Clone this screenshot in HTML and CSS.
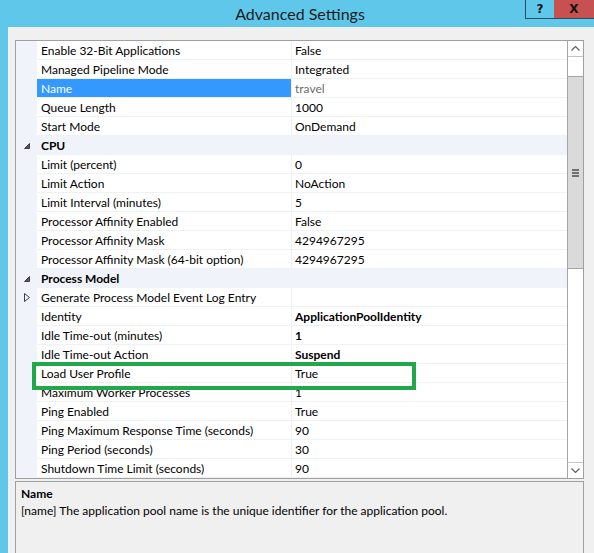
FILE: index.html
```html
<!DOCTYPE html>
<html lang="en">
<head>
    <meta charset="UTF-8">
    <title>Advanced Settings</title>
    <link rel="stylesheet" href="styles.css">
</head>
<body>

<div class="window">
    <!-- Title bar -->
    <div class="titlebar">
        <span class="title">Advanced Settings</span>
        <div class="controls">
            <span class="btn help">?</span>
            <span class="btn close">X</span>
        </div>
    </div>

    <div class="client">
        <!-- Property grid -->
        <div class="grid">
            <div class="rows">
                <div class="row"><span class="gutter"></span><span class="name">Enable 32-Bit Applications</span><span class="value">False</span></div>
                <div class="row"><span class="gutter"></span><span class="name">Managed Pipeline Mode</span><span class="value">Integrated</span></div>
                <div class="row selected"><span class="gutter"></span><span class="name">Name</span><span class="value">travel</span></div>
                <div class="row"><span class="gutter"></span><span class="name">Queue Length</span><span class="value">1000</span></div>
                <div class="row"><span class="gutter"></span><span class="name">Start Mode</span><span class="value">OnDemand</span></div>
                <div class="row category">
                    <span class="gutter"><svg width="6" height="6" viewBox="0 0 6 6"><polygon points="5.5,0.5 5.5,5.5 0.5,5.5" fill="#595959" stroke="#404040" stroke-width="1"/></svg></span>
                    <span class="name">CPU</span>
                </div>
                <div class="row"><span class="gutter"></span><span class="name">Limit (percent)</span><span class="value">0</span></div>
                <div class="row"><span class="gutter"></span><span class="name">Limit Action</span><span class="value">NoAction</span></div>
                <div class="row"><span class="gutter"></span><span class="name">Limit Interval (minutes)</span><span class="value">5</span></div>
                <div class="row"><span class="gutter"></span><span class="name">Processor Affinity Enabled</span><span class="value">False</span></div>
                <div class="row"><span class="gutter"></span><span class="name">Processor Affinity Mask</span><span class="value">4294967295</span></div>
                <div class="row"><span class="gutter"></span><span class="name">Processor Affinity Mask (64-bit option)</span><span class="value">4294967295</span></div>
                <div class="row category">
                    <span class="gutter"><svg width="6" height="6" viewBox="0 0 6 6"><polygon points="5.5,0.5 5.5,5.5 0.5,5.5" fill="#595959" stroke="#404040" stroke-width="1"/></svg></span>
                    <span class="name">Process Model</span>
                </div>
                <div class="row">
                    <span class="gutter"><svg width="6" height="9" viewBox="0 0 6 9"><polygon points="0.5,0.5 5.5,4.5 0.5,8.5" fill="none" stroke="#404040" stroke-width="1"/></svg></span>
                    <span class="name">Generate Process Model Event Log Entry</span><span class="value"></span>
                </div>
                <div class="row"><span class="gutter"></span><span class="name">Identity</span><span class="value bold">ApplicationPoolIdentity</span></div>
                <div class="row"><span class="gutter"></span><span class="name">Idle Time-out (minutes)</span><span class="value bold">1</span></div>
                <div class="row"><span class="gutter"></span><span class="name">Idle Time-out Action</span><span class="value bold">Suspend</span></div>
                <div class="row"><span class="gutter"></span><span class="name">Load User Profile</span><span class="value">True</span></div>
                <div class="row"><span class="gutter"></span><span class="name">Maximum Worker Processes</span><span class="value">1</span></div>
                <div class="row"><span class="gutter"></span><span class="name">Ping Enabled</span><span class="value">True</span></div>
                <div class="row"><span class="gutter"></span><span class="name">Ping Maximum Response Time (seconds)</span><span class="value">90</span></div>
                <div class="row"><span class="gutter"></span><span class="name">Ping Period (seconds)</span><span class="value">30</span></div>
                <div class="row"><span class="gutter"></span><span class="name">Shutdown Time Limit (seconds)</span><span class="value">90</span></div>
            </div>

            <!-- Vertical scrollbar -->
            <div class="scrollbar">
                <div class="sb-btn">
                    <svg width="9" height="5" viewBox="0 0 9 5"><polyline points="0.5,4.5 4.5,0.5 8.5,4.5" fill="none" stroke="#606060" stroke-width="1.2"/></svg>
                </div>
                <div class="sb-space top"></div>
                <div class="sb-thumb">
                    <span class="grip"></span><span class="grip"></span><span class="grip"></span>
                </div>
                <div class="sb-space"></div>
                <div class="sb-btn down">
                    <svg width="9" height="5" viewBox="0 0 9 5"><polyline points="0.5,0.5 4.5,4.5 8.5,0.5" fill="none" stroke="#606060" stroke-width="1.2"/></svg>
                </div>
            </div>
        </div>

        <!-- Description panel -->
        <div class="desc">
            <div class="desc-title">Name</div>
            <div class="desc-text">[name] The application pool name is the unique identifier for the application pool.</div>
        </div>

        <!-- Annotation drawn over the grid -->
        <div class="highlight"></div>
    </div>
</div>

</body>
</html>
```

FILE: styles.css
```css
html, body {
    margin: 0;
    padding: 0;
}
body {
    width: 594px;
    height: 553px;
    overflow: hidden;
    background-color: #5fc8ea;
    font-family: Lato, "Noto Sans", sans-serif;
    font-size: 12px;
    color: #000;
}
.window {
    display: flex;
    flex-direction: column;
    height: 100%;
}
.titlebar {
    position: relative;
    flex-shrink: 0;
    height: 27px;
    display: flex;
    align-items: center;
    justify-content: center;
}
.title {
    font-size: 16px;
    color: #1c1c1c;
    margin-left: 6px;
}
.controls {
    position: absolute;
    top: 0;
    right: 0;
    display: flex;
}
.btn {
    height: 19px;
    display: flex;
    align-items: center;
    justify-content: center;
    font-family: "DejaVu Sans", sans-serif;
    font-weight: bold;
    font-size: 12px;
    color: #111;
    box-sizing: border-box;
}
.help {
    width: 29px;
    border: 1px solid #2d4f5c;
    border-top: none;
    border-right: none;
}
.close {
    width: 40px;
    background-color: #c75050;
    border-bottom: 1px solid #2d4f5c;
}
.client {
    position: relative;
    flex: 1;
    min-height: 0;
    overflow: hidden;
    margin-left: 8px;
    background-color: #f0f0f0;
    padding: 13px 10px 0 7px;
}
.grid {
    display: flex;
    border: 1px solid #a0a0a0;
    background-color: #fff;
    height: 437px;
}
.rows {
    flex: 1;
}
.row {
    display: grid;
    grid-template-columns: 21px 255px 1fr;
    height: 19px;
    line-height: 18px;
}
.gutter {
    background-color: #f0f4fa;
    display: flex;
    align-items: center;
    justify-content: center;
}
.name, .value {
    box-sizing: border-box;
    border-bottom: 1px solid #eef1f6;
    padding: 1px 0 0 4px;
    white-space: nowrap;
    overflow: hidden;
}
.name {
    border-right: 1px solid #eef1f6;
}
.value {
    padding-left: 3px;
}
.bold {
    font-weight: bold;
}
.selected .name {
    background-color: #3399ff;
    color: #fff;
}
.selected .value {
    color: #6d6d6d;
}
.category {
    background-color: #f0f4fa;
}
.category .name {
    grid-column: 2 / 4;
    font-weight: bold;
    border: none;
}
.scrollbar {
    width: 15px;
    border-left: 1px solid #a6a6a6;
    display: flex;
    flex-direction: column;
}
.sb-btn {
    height: 15px;
    border-bottom: 1px solid #c4c4c4;
    display: flex;
    align-items: center;
    justify-content: center;
}
.sb-btn.down {
    border-bottom: none;
    border-top: 1px solid #c4c4c4;
}
.sb-space {
    flex: 1;
}
.sb-space.top {
    flex: 0 0 19px;
}
.sb-thumb {
    height: 191px;
    background-color: #dadada;
    border-top: 1px solid #a6a6a6;
    border-bottom: 1px solid #a6a6a6;
    display: flex;
    flex-direction: column;
    align-items: center;
    justify-content: center;
    gap: 1px;
}
.grip {
    width: 7px;
    height: 2px;
    background-color: #707070;
}
.desc {
    margin-top: 2px;
    height: 80px;
    border: 1px solid #a0a0a0;
    padding: 3px 5px;
}
.desc-title {
    font-weight: bold;
    line-height: 17px;
}
.desc-text {
    line-height: 18px;
}
.highlight {
    position: absolute;
    left: 24px;
    top: 335px;
    width: 376px;
    height: 20px;
    border: 4px solid #22a84a;
}
```
